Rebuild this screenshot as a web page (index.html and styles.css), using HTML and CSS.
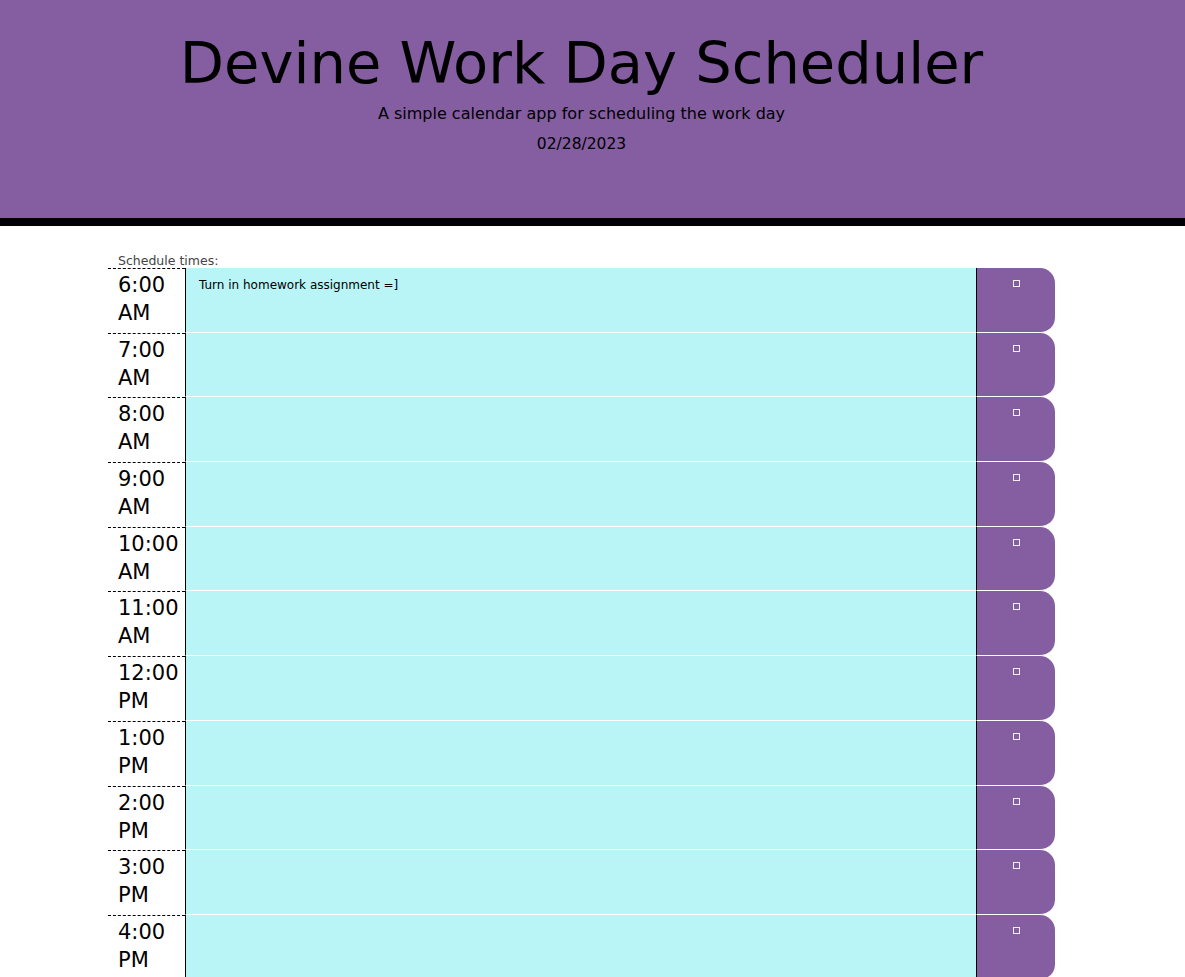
FILE: index.html
```html
<!DOCTYPE html>
<html lang="en">
<head>
<meta charset="utf-8">
<title>Devine Work Day Scheduler</title>
<link rel="stylesheet" href="styles.css">
</head>
<body>
<header class="jumbotron">
  <div class="jumbo-inner">
    <h1 class="display">Devine Work Day Scheduler</h1>
    <p class="lead">A simple calendar app for scheduling the work day</p>
    <p class="current-day">02/28/2023</p>
  </div>
</header>
<main class="page">
  <div class="container">
    <div class="label">Schedule times:</div>
    <div class="time-block"><div class="hour">6:00 AM</div><textarea class="description">Turn in homework assignment =]</textarea><button class="save-btn"><span class="icon"></span></button></div>
    <div class="time-block"><div class="hour">7:00 AM</div><textarea class="description"></textarea><button class="save-btn"><span class="icon"></span></button></div>
    <div class="time-block"><div class="hour">8:00 AM</div><textarea class="description"></textarea><button class="save-btn"><span class="icon"></span></button></div>
    <div class="time-block"><div class="hour">9:00 AM</div><textarea class="description"></textarea><button class="save-btn"><span class="icon"></span></button></div>
    <div class="time-block"><div class="hour">10:00 AM</div><textarea class="description"></textarea><button class="save-btn"><span class="icon"></span></button></div>
    <div class="time-block"><div class="hour">11:00 AM</div><textarea class="description"></textarea><button class="save-btn"><span class="icon"></span></button></div>
    <div class="time-block"><div class="hour">12:00 PM</div><textarea class="description"></textarea><button class="save-btn"><span class="icon"></span></button></div>
    <div class="time-block"><div class="hour">1:00 PM</div><textarea class="description"></textarea><button class="save-btn"><span class="icon"></span></button></div>
    <div class="time-block"><div class="hour">2:00 PM</div><textarea class="description"></textarea><button class="save-btn"><span class="icon"></span></button></div>
    <div class="time-block"><div class="hour">3:00 PM</div><textarea class="description"></textarea><button class="save-btn"><span class="icon"></span></button></div>
    <div class="time-block"><div class="hour">4:00 PM</div><textarea class="description"></textarea><button class="save-btn"><span class="icon"></span></button></div>
  </div>
</main>
</body>
</html>
```

FILE: styles.css
```css
html {
  overflow: hidden;
}
body {
  margin: 0;
  font-family: "DejaVu Sans", "Liberation Sans", sans-serif;
  color: #000;
  background: #fff;
}
.jumbotron {
  background: #845ea0;
  height: 218px;
  border-bottom: 8px solid #000;
}
.jumbo-inner {
  width: 1163px;
  padding-top: 29px;
  text-align: center;
}
.display {
  margin: 0;
  font-size: 57.5px;
  font-weight: normal;
  line-height: 70px;
}
.lead {
  margin: 0;
  padding-top: 3px;
  font-size: 16px;
  line-height: 24px;
}
.current-day {
  margin: 6px 0 0;
  font-size: 15.5px;
  line-height: 24px;
}
.page {
  width: 1163px;
  padding-top: 27px;
}
.container {
  width: 947px;
  margin: 0 auto;
}
.label {
  font-size: 12.5px;
  line-height: 15px;
  color: #444;
  padding-left: 10px;
}
.time-block {
  display: flex;
  height: 64.7px;
}
.hour {
  box-sizing: border-box;
  width: 77px;
  flex: none;
  border-top: 1px dashed #000;
  padding: 2px 0 0 10px;
  font-size: 21px;
  line-height: 28px;
}
.description {
  box-sizing: border-box;
  width: 791px;
  flex: none;
  height: 100%;
  margin: 0;
  resize: none;
  border: none;
  border-left: 1px solid #000;
  border-bottom: 1px solid #fff;
  background: #b9f5f6;
  padding: 10px 12px 8px 13px;
  font-family: "DejaVu Sans", "Liberation Sans", sans-serif;
  font-size: 12px;
  line-height: 14px;
  color: #000;
  outline: none;
}
.save-btn {
  box-sizing: border-box;
  width: 79px;
  flex: none;
  height: 100%;
  margin: 0;
  border: none;
  border-left: 1px solid #000;
  border-bottom: 1px solid #fff;
  border-radius: 0 15px 15px 0;
  background: #845ea0;
  padding: 12px 0 0;
  display: flex;
  justify-content: center;
  align-items: flex-start;
}
.icon {
  display: block;
  width: 7px;
  height: 7px;
  box-sizing: border-box;
  border: 1px solid #f0f0f0;
}
```
